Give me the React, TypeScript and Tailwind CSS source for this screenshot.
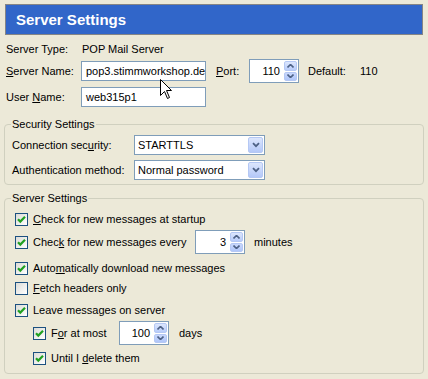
import type { ReactNode } from 'react';

const FONT = { fontFamily: '"Liberation Sans", Arial, sans-serif' };

function Checkbox({ checked }: { checked: boolean }) {
  return (
    <span className="flex h-[13px] w-[13px] shrink-0 items-center justify-center border border-[#1C5180] bg-gradient-to-br from-[#DCDCD7] to-white">
      {checked && (
        <svg width="11" height="11" viewBox="0 0 11 11">
          <path d="M2 5.2 L4.3 7.6 L9 2.8" fill="none" stroke="#21A121" strokeWidth="2.2" />
        </svg>
      )}
    </span>
  );
}

function SpinButtons() {
  return (
    <div className="flex h-full w-[14px] flex-col gap-[1px] py-[1px] pr-[1px]">
      <div className="flex flex-1 items-center justify-center rounded-[2px] border border-[#B5C8F4] bg-gradient-to-b from-[#DCE6FD] to-[#B8CCFA]">
        <svg width="7" height="4" viewBox="0 0 7 4">
          <path d="M0.5 3.5 L3.5 0.5 L6.5 3.5" fill="none" stroke="#4D6185" strokeWidth="1.6" />
        </svg>
      </div>
      <div className="flex flex-1 items-center justify-center rounded-[2px] border border-[#B5C8F4] bg-gradient-to-b from-[#C9D8FC] to-[#B0C6F9]">
        <svg width="7" height="4" viewBox="0 0 7 4">
          <path d="M0.5 0.5 L3.5 3.5 L6.5 0.5" fill="none" stroke="#4D6185" strokeWidth="1.6" />
        </svg>
      </div>
    </div>
  );
}

function Spinner({ value }: { value: string }) {
  return (
    <div className="flex h-[24px] w-[50px] shrink-0 items-stretch border border-[#7F9DB9] bg-white">
      <span className="flex flex-1 items-center justify-end pr-[4px]">{value}</span>
      <SpinButtons />
    </div>
  );
}

function TextBox({ value }: { value: string }) {
  return (
    <div className="flex h-[20px] w-[125px] shrink-0 items-center overflow-hidden whitespace-nowrap border border-[#7F9DB9] bg-white pl-[4px]">
      {value}
    </div>
  );
}

function Select({ value }: { value: string }) {
  return (
    <div className="flex h-[20px] w-[131px] shrink-0 items-stretch border border-[#7F9DB9] bg-white">
      <span className="flex flex-1 items-center pl-[3px]">{value}</span>
      <div className="m-[1px] flex w-[15px] items-center justify-center rounded-[2px] border border-[#B5C8F4] bg-gradient-to-b from-[#DCE6FD] to-[#B4C8F8]">
        <svg width="8" height="6" viewBox="0 0 8 6">
          <path d="M1 1.2 L4 4.2 L7 1.2" fill="none" stroke="#4D6185" strokeWidth="1.8" />
        </svg>
      </div>
    </div>
  );
}

function CheckRow({
  checked,
  children,
  className = '',
}: {
  checked: boolean;
  children: ReactNode;
  className?: string;
}) {
  return (
    <div className={`flex items-center gap-[5px] ${className}`}>
      <Checkbox checked={checked} />
      {children}
    </div>
  );
}

function Cursor() {
  return (
    <svg
      className="pointer-events-none absolute left-[160px] top-[79px]"
      width="13"
      height="21"
      viewBox="0 0 13 21"
    >
      <path
        d="M0.5 0.5 L0.5 16.5 L4.5 12.5 L7.5 19.5 L9.5 18.5 L6.5 11.5 L11.5 11.5 Z"
        fill="white"
        stroke="black"
        strokeWidth="1"
        strokeLinejoin="miter"
      />
    </svg>
  );
}

export default function App() {
  return (
    <div
      className="relative h-[379px] w-[428px] overflow-hidden bg-[#ECE9D8] text-[11px] leading-[13px] text-black"
      style={FONT}
    >
      <div className="mx-[5px] mt-[4px] flex h-[31px] items-center border border-[#858585] bg-[#3166C9] pl-[10px] text-[15px] font-bold text-white">
        Server Settings
      </div>

      <div className="pl-[6px]">
        <div className="mt-[6px] flex h-[16px] items-center">
          <span className="w-[76px]">Server Type:</span>
          <span>POP Mail Server</span>
        </div>
        <div className="mt-[2px] flex h-[24px] items-center">
          <span className="w-[75px]">
            <span className="underline">S</span>erver Name:
          </span>
          <TextBox value="pop3.stimmworkshop.de" />
          <span className="ml-[10px] w-[33px]">
            <span className="underline">P</span>ort:
          </span>
          <Spinner value="110" />
          <span className="ml-[9px] w-[52px]">Default:</span>
          <span>110</span>
        </div>
        <div className="mt-[4px] flex h-[20px] items-center">
          <span className="w-[75px]">
            User <span className="underline">N</span>ame:
          </span>
          <TextBox value="web315p1" />
        </div>
      </div>

      <fieldset className="mx-[4px] mt-[11px] rounded-[4px] border border-[#D0D0BF] pb-[4px] pl-[6px] pt-0">
        <legend className="px-[1px] leading-[13px]">Security Settings</legend>
        <div className="mt-[4px] flex h-[20px] items-center pl-[1px]">
          <span className="w-[122px]">
            Connection sec<span className="underline">u</span>rity:
          </span>
          <Select value="STARTTLS" />
        </div>
        <div className="mt-[5px] flex h-[20px] items-center pl-[1px]">
          <span className="w-[122px]">Authentication method:</span>
          <Select value="Normal password" />
        </div>
      </fieldset>

      <fieldset className="mx-[4px] mt-[7px] rounded-[4px] border border-[#D0D0BF] pb-[5px] pl-[6px] pt-0">
        <legend className="px-[1px] leading-[13px]">Server Settings</legend>
        <div className="pl-[4px]">
          <CheckRow checked className="mt-[4px] h-[20px]">
            <span>
              <span className="underline">C</span>heck for new messages at startup
            </span>
          </CheckRow>
          <CheckRow checked className="mt-[1px] h-[24px]">
            <span className="w-[157px]">
              Chec<span className="underline">k</span> for new messages every
            </span>
            <Spinner value="3" />
            <span className="ml-[4px]">minutes</span>
          </CheckRow>
          <CheckRow checked className="mt-[4px] h-[20px]">
            <span>
              Auto<span className="underline">m</span>atically download new messages
            </span>
          </CheckRow>
          <CheckRow checked={false} className="h-[20px]">
            <span>
              <span className="underline">F</span>etch headers only
            </span>
          </CheckRow>
          <CheckRow checked className="mt-[2px] h-[20px]">
            <span>
              Leave messa<span className="underline">g</span>es on server
            </span>
          </CheckRow>
          <div className="pl-[18px]">
            <CheckRow checked className="mt-[1px] h-[24px]">
              <span className="w-[63px]">
                F<span className="underline">o</span>r at most
              </span>
              <Spinner value="100" />
              <span className="ml-[5px]">days</span>
            </CheckRow>
            <CheckRow checked className="mt-[3px] h-[20px]">
              <span>
                Until I <span className="underline">d</span>elete them
              </span>
            </CheckRow>
          </div>
        </div>
      </fieldset>

      <Cursor />
    </div>
  );
}
